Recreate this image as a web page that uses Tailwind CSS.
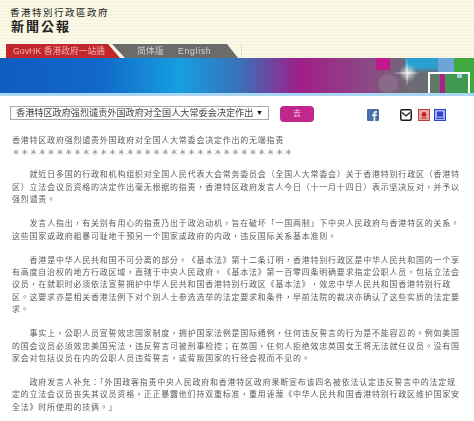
<!DOCTYPE html>
<html lang="zh-Hant">
<head>
  <meta charset="UTF-8" />
  <title>新聞公報</title>
  <script src="https://cdn.jsdelivr.net/npm/@tailwindcss/browser@4"></script>
</head>
<body class="bg-white w-[474px] h-[421px] overflow-hidden font-['Liberation_Sans','Noto_Sans_CJK_TC',sans-serif]">
  <!-- header -->
  <header class="h-[58px] flex flex-col bg-[repeating-linear-gradient(#fbf9e8_0_2px,#f4f2da_2px_3px)]">
    <div class="pl-[10px] pt-[6px] h-[44px] text-[#222]">
      <p class="text-[9.5px] leading-[13px] tracking-[1.5px]">香港特別行政區政府</p>
      <p class="text-[13px] leading-[16px] font-bold tracking-[2px] pl-[1px]">新聞公報</p>
    </div>
    <nav class="flex pl-[6px] h-[14px] text-[8.7px] leading-[15px] blur-[0.2px]">
      <a class="w-[119px] pl-[7px] bg-[#c1272d] text-[#f2b4b4] tracking-[0.05px] [clip-path:polygon(0_0,102px_0,114px_100%,0_100%)]">GovHK 香港政府一站通</a>
      <div class="w-[126px] -ml-[13px] flex bg-[#6b6b6b] text-[#d4d4d4] pl-[25px] [clip-path:polygon(0_0,115px_0,126px_100%,13px_100%)]">
        <a class="w-[41px] tracking-[0.3px]">简体版</a>
        <a class="tracking-[0.7px]">English</a>
      </div>
      <div class="ml-[3px] w-px bg-[#dcdcd0]"></div>
    </nav>
  </header>

  <!-- banner -->
  <div class="relative h-[35px] overflow-hidden bg-[linear-gradient(90deg,#0f5cc0_0,#1268c8_100px,#159fe0_180px,#3a70b8_240px,#a01e88_300px,#8c4a84_370px,#6c6c72_410px,#66686c_100%)]">
    <div class="absolute left-[376px] top-0 w-[14px] h-[12px] bg-[#c2188c]"></div>
    <div class="absolute left-[405px] top-0 w-[33px] h-[15px] bg-[linear-gradient(#2aa0d0_60%,#2aa0d000)]"></div>
    <div class="absolute left-[438px] top-0 w-[16px] h-[14px] bg-[#6fa4d8]"></div>
    <div class="absolute left-[454px] top-0 w-[20px] h-[35px] bg-[#3fa83f]"></div>
    <div class="absolute left-[378px] top-[16px] w-[20px] h-[19px] rounded-full bg-[#8a6a88]"></div>
    <div class="absolute left-[399px] top-[6px] w-[18px] h-[18px] rounded-full bg-[radial-gradient(#ffffffcc,#ffffff00_70%)]"></div>
    <svg class="absolute left-[392px] top-0" width="30" height="30" viewBox="0 0 30 30"><path d="M15 1L15.8 14.2L29 15L15.8 15.8L15 29L14.2 15.8L1 15L14.2 14.2Z" fill="#e8eef0"/></svg>
    <div class="absolute left-[428px] top-[14px] w-[42px] h-[21px] flex border-x-2 border-t-2 border-white bg-[#5e7a66]">
      <div class="ml-[10px] w-[5px] h-full bg-[#b01f88]"></div>
      <div class="relative flex-1 bg-[#3f9a50]">
        <div class="absolute right-[6px] top-0 w-[5px] h-[4px] bg-[#9cd0dc]"></div>
      </div>
    </div>
  </div>
  <div class="h-[3px] bg-[#a9d6f2]"></div>

  <!-- controls -->
  <div class="flex items-start h-[27px] pl-[10px] pt-[10px]">
    <div class="w-[259px] h-[14px] flex items-center justify-between border border-[#aaa] pl-[5px] pr-[5px] text-[9.15px] leading-[12px] text-[#444] overflow-hidden">
      <span class="whitespace-nowrap blur-[0.2px]">香港特区政府强烈谴责外国政府对全国人大常委会决定作出</span>
      <span class="text-[7px] text-black">▼</span>
    </div>
    <button class="ml-[11px] w-[34px] h-[16px] rounded-[4px] bg-[#c0288c] text-[8px] leading-[16px] text-[#f4c8e4]">去</button>
    <svg class="ml-[53px] mt-[3px]" width="12" height="12" viewBox="0 0 12 12"><rect width="12" height="12" rx="1" fill="#4a6ea8"/><path d="M6.5 12V7H5V5.2H6.5V4C6.5 2.8 7.4 2 8.5 2H10V3.7H9C8.5 3.7 8.3 4 8.3 4.4V5.2H10L9.7 7H8.3V12Z" fill="#e8eef6"/></svg>
    <svg class="ml-[21px] mt-[3px]" width="12" height="12" viewBox="0 0 12 12"><rect x="0.75" y="0.75" width="10.5" height="10.5" rx="1.5" fill="#fff" stroke="#1c1c1c" stroke-width="1.5"/><path d="M2 3.5L6 7L10 3.5" fill="none" stroke="#1c1c1c" stroke-width="1.3"/></svg>
    <svg class="ml-[6px] mt-[3px]" width="12" height="12" viewBox="0 0 12 12"><rect x="0.5" y="0.5" width="11" height="11" fill="#e8a8a8" stroke="#b84040"/><circle cx="6" cy="5.5" r="2.4" fill="#d02020"/><rect x="3" y="8.5" width="6" height="1.2" fill="#b84040"/></svg>
    <svg class="ml-[4px] mt-[3px]" width="12" height="12" viewBox="0 0 12 12"><rect x="0.5" y="0.5" width="11" height="11" fill="#a8b4f4" stroke="#3040d0"/><rect x="3" y="2.5" width="6" height="5" fill="#3040d0"/><rect x="2" y="8.7" width="8" height="1.2" fill="#3040d0"/></svg>
  </div>

  <!-- article -->
  <main class="pl-[12px] w-[462px] pt-[11px] font-['Noto_Sans_CJK_TC',sans-serif] text-[8px] tracking-[0.78px] leading-[12.4px] text-[#5c5c5c] blur-[0.3px]">
    <p>香港特区政府强烈谴责外国政府对全国人大常委会决定作出的无端指责</p>
    <p class="text-[#777]">＊＊＊＊＊＊＊＊＊＊＊＊＊＊＊＊＊＊＊＊＊＊＊＊＊＊＊＊＊＊＊＊</p>
    <p class="mt-[9.6px] indent-[17.6px]">就近日多国的行政和机构组织对全国人民代表大会常务委员会（全国人大常委会）关于香港特别行政区（香港特区）立法会议员资格的决定作出毫无根据的指责，香港特区政府发言人今日（十一月十四日）表示坚决反对，并予以强烈谴责。</p>
    <p class="mt-[11.6px] indent-[17.6px]">发言人指出，有关别有用心的指责乃出于政治动机，旨在破坏「一国两制」下中央人民政府与香港特区的关系。这些国家或政府粗暴可耻地干预另一个国家或政府的内政，违反国际关系基本准则。</p>
    <p class="mt-[11.6px] indent-[17.6px]">香港是中华人民共和国不可分离的部分。《基本法》第十二条订明，香港特别行政区是中华人民共和国的一个享有高度自治权的地方行政区域，直辖于中央人民政府。《基本法》第一百零四条明确要求指定公职人员，包括立法会议员，在就职时必须依法宣誓拥护中华人民共和国香港特别行政区《基本法》，效忠中华人民共和国香港特别行政区。这要求亦是相关香港法例下对个别人士参选选举的法定要求和条件，早前法院的裁决亦确认了这些实质的法定要求。</p>
    <p class="mt-[11.6px] indent-[17.6px]">事实上，公职人员宣誓效忠国家制度，拥护国家法例是国际通例，任何违反誓言的行为是不能容忍的。例如美国的国会议员必须效忠美国宪法，违反誓言可被刑事检控；在英国，任何人拒绝效忠英国女王将无法就任议员。没有国家会对包括议员在内的公职人员违背誓言，或背叛国家的行径会视而不见的。</p>
    <p class="mt-[11.6px] indent-[17.6px]">政府发言人补充：「外国政客指责中央人民政府和香港特区政府果断宣布该四名被依法认定违反誓言中的法定规定的立法会议员丧失其议员资格，正正暴露他们持双重标准，重用诬蔑《中华人民共和国香港特别行政区维护国家安全法》时所使用的技俩。」</p>
  </main>
</body>
</html>
